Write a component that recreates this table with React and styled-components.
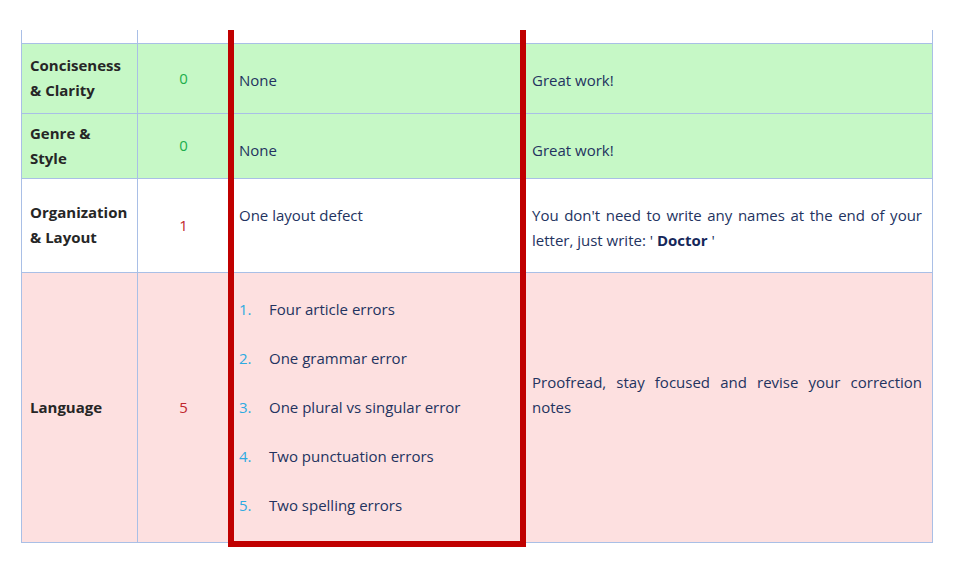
import React from 'react';
import styled, { createGlobalStyle } from 'styled-components';

const rows = [
    { label: ['Conciseness', '& Clarity'], score: 0, tone: 'good', issue: 'None', tip: 'Great work!', height: 70 },
    { label: ['Genre &', 'Style'], score: 0, tone: 'good', issue: 'None', tip: 'Great work!', height: 65 },
    {
        label: ['Organization', '& Layout'],
        score: 1,
        tone: 'plain',
        issue: 'One layout defect',
        tip: (
            <>
                You don't need to write any names at the end of your letter, just write: ' <b>Doctor</b> '
            </>
        ),
        height: 94,
    },
];

const languageErrors = [
    'Four article errors',
    'One grammar error',
    'One plural vs singular error',
    'Two punctuation errors',
    'Two spelling errors',
];

const App = () => {
    return (
        <>
            <GlobalStyle />
            <Page>
                <TableWrap>
                    <Table>
                        <colgroup>
                            <col style={{ width: 116 }} />
                            <col style={{ width: 92 }} />
                            <col style={{ width: 293 }} />
                            <col />
                        </colgroup>
                        <tbody>
                            <Row $h={13}>
                                <td />
                                <td />
                                <td />
                                <td />
                            </Row>
                            {rows.map((row) => (
                                <Row key={row.label[0]} $tone={row.tone} $h={row.height}>
                                    <Label>
                                        {row.label[0]}
                                        <br />
                                        {row.label[1]}
                                    </Label>
                                    <Score $bad={row.score > 0}>{row.score}</Score>
                                    <Text>{row.issue}</Text>
                                    <Text $justify>{row.tip}</Text>
                                </Row>
                            ))}
                            <Row $tone="bad" $h={270}>
                                <Label>Language</Label>
                                <Score $bad>5</Score>
                                <ListCell>
                                    <ErrorList>
                                        {languageErrors.map((err, i) => (
                                            <li key={err}>
                                                <Num>{i + 1}.</Num>
                                                {err}
                                            </li>
                                        ))}
                                    </ErrorList>
                                </ListCell>
                                <Advice>
                                    Proofread, stay focused and revise your correction notes
                                </Advice>
                            </Row>
                        </tbody>
                    </Table>
                    <Highlight />
                </TableWrap>
            </Page>
        </>
    );
};

export default App;

const GlobalStyle = createGlobalStyle`
    html, body {
        margin: 0;
        padding: 0;
        background: #ffffff;
    }
    body {
        font-family: "Open Sans", "Noto Sans", sans-serif;
        font-size: 15px;
        color: #23335f;
    }
`;

const Page = styled.div`
    width: 953px;
    height: 572px;
    padding: 30px 0 0 21px;
    box-sizing: border-box;
    overflow: hidden;
`;

const TableWrap = styled.div`
    position: relative;
    width: 912px;
`;

const Table = styled.table`
    width: 912px;
    border-collapse: collapse;
    table-layout: fixed;
    td {
        border: 1px solid #a9bfe6;
        padding: 0;
    }
    tr:first-child td {
        border-top: none;
    }
`;

const tones = {
    good: '#c6f8c6',
    bad: '#fde0e0',
    plain: '#ffffff',
};

const Row = styled.tr`
    height: ${(p) => p.$h}px;
    background: ${(p) => tones[p.$tone] || '#ffffff'};
`;

const Label = styled.td`
    vertical-align: middle;
    padding: 0 6px 0 8px !important;
    font-weight: 700;
    line-height: 25px;
    color: #262626;
`;

const Score = styled.td`
    vertical-align: middle;
    text-align: center;
    line-height: 25px;
    color: ${(p) => (p.$bad ? '#c0262c' : '#1eae4c')};
`;

const Text = styled.td`
    vertical-align: top;
    padding: 24px 10px 0 9px !important;
    line-height: 25px;
    text-align: ${(p) => (p.$justify ? 'justify' : 'left')};
    b {
        font-weight: 700;
        color: #16275a;
    }
`;

const ListCell = styled.td`
    vertical-align: middle;
    padding: 0 9px !important;
`;

const ErrorList = styled.ol`
    list-style: none;
    margin: 0;
    padding: 0;
    display: flex;
    flex-direction: column;
    gap: 24px;
    li {
        display: flex;
        line-height: 25px;
    }
`;

const Num = styled.span`
    width: 30px;
    flex: none;
    color: #2eaae1;
`;

const Advice = styled.td`
    vertical-align: middle;
    padding: 0 10px 25px 9px !important;
    line-height: 25px;
    text-align: justify;
`;

const Highlight = styled.div`
    position: absolute;
    left: 207px;
    top: 0;
    width: 298px;
    height: 517px;
    box-sizing: border-box;
    border: 6px solid #c00000;
    border-top: none;
    pointer-events: none;
`;
